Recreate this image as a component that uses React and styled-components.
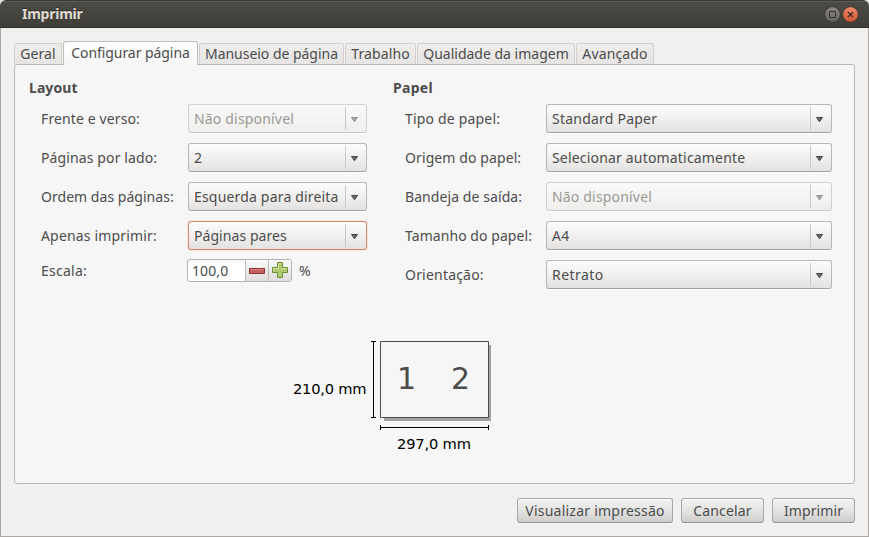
import React from "react";
import styled, { createGlobalStyle } from "styled-components";

const Global = createGlobalStyle`
  * { box-sizing: border-box; }
  html, body { margin: 0; padding: 0; background: #3c3b37; }
  body { width: 869px; height: 537px; overflow: hidden; }
`;

const Window = styled.div`
  width: 869px;
  height: 537px;
  display: flex;
  flex-direction: column;
  background: linear-gradient(135deg, #e6e6e6 4px, transparent 4px) 0 0 / 8px 8px no-repeat,
    linear-gradient(225deg, #e6e6e6 4px, transparent 4px) 100% 0 / 8px 8px no-repeat, #f1f0ee;
  font-family: "Noto Sans", "Open Sans", sans-serif;
  font-size: 14px;
  color: #4c4c4c;
  white-space: nowrap;
`;

const TitleBar = styled.header`
  height: 28px;
  flex: none;
  display: flex;
  align-items: center;
  gap: 2px;
  padding: 2px 10px 0 22px;
  border-radius: 6px 6px 0 0;
  border-bottom: 1px solid #302f2b;
  background: linear-gradient(#3c3b37 0 1px, #5d5b55 1px 2px, #4d4b46 2px, #3e3d38 100%);
  color: #dfdbd2;
  font-weight: 700;
  text-shadow: 0 -1px 0 #2b2a27;
`;

const Title = styled.h1`
  margin: 0 auto 2px 0;
  font-size: 14px;
  line-height: 20px;
  letter-spacing: -0.25px;
`;

const Body = styled.main`
  flex: 1;
  display: flex;
  flex-direction: column;
  padding: 13px 13px 13px;
  border: 1px solid #aaa7a4;
  border-top: 0;
`;

const Tabs = styled.nav`
  height: 24px;
  flex: none;
  display: flex;
  align-items: flex-end;
  gap: 1px;
  position: relative;
  z-index: 1;
`;

const Tab = styled.div`
  width: ${(p) => p.$w}px;
  height: ${(p) => (p.$active ? 24 : 21)}px;
  margin-bottom: ${(p) => (p.$active ? 0 : 1)}px;
  line-height: ${(p) => (p.$active ? 21 : 19)}px;
  text-align: center;
  border: 1px solid ${(p) => (p.$active ? "#c1bfbc" : "#d2d0cd")};
  border-bottom: 0;
  border-radius: 3px 3px 0 0;
  background: ${(p) => (p.$active ? "linear-gradient(#fff, #f6f6f6)" : "linear-gradient(#eeedec, #e6e5e3)")};
  letter-spacing: ${(p) => p.$ls || 0}px;
`;

const Panel = styled.section`
  height: 420px;
  margin-top: -1px;
  border: 1px solid #bab7b4;
  border-radius: 3px;
  background: #f6f6f6;
  padding: 13px 22px 0 14px;
`;

const Columns = styled.div`
  display: grid;
  grid-template-columns: 364px 439px;
  height: 240px;
`;

const Heading = styled.h2`
  margin: 0;
  height: 21px;
  font-size: 14px;
  line-height: 20px;
  font-weight: 700;
  letter-spacing: ${(p) => p.$ls || 0}px;
`;

const Row = styled.div`
  display: grid;
  grid-template-columns: ${(p) => p.$label}px auto;
  justify-content: start;
  align-items: center;
  height: 39px;
  padding-left: 12px;
`;

const Label = styled.span`
  line-height: 20px;
  letter-spacing: ${(p) => p.$ls || 0}px;
`;

const Combo = styled.div`
  width: ${(p) => p.$w}px;
  height: 29px;
  display: flex;
  align-items: center;
  padding-left: 5px;
  border: 1px solid ${(p) => (p.$focus ? "#d48b72" : p.$disabled ? "#d3d1cf" : "#b9b6b3")};
  border-bottom-color: ${(p) => (p.$focus ? "#d0846b" : p.$disabled ? "#cbc9c7" : "#a4a19e")};
  border-radius: 3px;
  color: ${(p) => (p.$disabled ? "#9b9893" : "#4c4c4c")};
  background: ${(p) => (p.$disabled ? "linear-gradient(#fafafa, #efeeed)" : "linear-gradient(#fcfcfc, #f1f0ef 50%, #e4e2e0)")};
  box-shadow: ${(p) => (p.$focus ? "0 0 0 1px #f6e6e0" : "0 1px 0 #fdfdfd")};
`;

const Value = styled.span`
  flex: 1;
  line-height: 20px;
  letter-spacing: ${(p) => p.$ls || 0}px;
`;

const ArrowCell = styled.span`
  width: 21px;
  height: 23px;
  display: flex;
  align-items: center;
  padding: 2px 0 0 4px;
  border-left: 1px solid #cbc9c7;
`;

const ScaleRow = styled.div`
  display: flex;
  align-items: center;
  height: 31px;
  padding-left: 12px;
`;

const ScaleLabel = styled(Label)`
  width: 146px;
`;

const Spin = styled.div`
  width: 105px;
  height: 23px;
  display: flex;
  margin-right: 7px;
  border: 1px solid #b6b3b0;
  border-radius: 3px;
  background: linear-gradient(#f3f3f3, #fff 4px);
  overflow: hidden;
`;

const SpinText = styled.span`
  width: 57px;
  padding-left: 4px;
  line-height: 22px;
  letter-spacing: 0.1px;
`;

const Step = styled.span`
  flex: 1;
  display: flex;
  align-items: center;
  justify-content: center;
  border-left: 1px solid #bebbb8;
  background: linear-gradient(#fafafa, #dfdddb);
`;

const Preview = styled.div`
  padding-left: 264px;
  margin-top: 17px;
  svg { display: block; }
`;

const Actions = styled.footer`
  display: flex;
  justify-content: flex-end;
  gap: 8px;
  margin-top: 14px;
`;

const Button = styled.button`
  width: ${(p) => p.$w}px;
  height: 25px;
  padding: 0;
  font: inherit;
  line-height: 22px;
  color: #4c4c4c;
  border: 1px solid #aaa7a4;
  border-bottom-color: #918e8b;
  border-radius: 3px;
  background: linear-gradient(#f3f3f3, #e3e3e2 50%, #cfcecd);
  box-shadow: inset 0 1px 0 #fff, 0 1px 0 #fafafa;
  letter-spacing: ${(p) => p.$ls || 0}px;
`;

const Arrow = ({ muted }) => (
  <svg width="9" height="6" viewBox="0 0 9 6">
    <path d="M1.500.5h6L4.500 4.800z" fill={muted ? "#a9a6a3" : "#6a6a6a"} stroke={muted ? "#97938f" : "#454545"} />
  </svg>
);

const Select = ({ value, w, disabled, focus, ls }) => (
  <Combo $w={w} $disabled={disabled} $focus={focus}>
    <Value $ls={ls}>{value}</Value>
    <ArrowCell><Arrow muted={disabled} /></ArrowCell>
  </Combo>
);

const tabs = [
  ["Geral", 48, 0.1],
  ["Configurar página", 135, -0.06, true],
  ["Manuseio de página", 145, -0.03],
  ["Trabalho", 71, 0.1],
  ["Qualidade da imagem", 158, 0],
  ["Avançado", 78, 0.15],
];

const layoutRows = [
  { label: "Frente e verso:", labelLs: 0.12, value: "Não disponível", ls: 0.18, disabled: true },
  { label: "Páginas por lado:", labelLs: 0.12, value: "2" },
  { label: "Ordem das páginas:", labelLs: 0.03, value: "Esquerda para direita", ls: 0.18 },
  { label: "Apenas imprimir:", labelLs: 0.17, value: "Páginas pares", ls: 0.06, focus: true },
];

const paperRows = [
  { label: "Tipo de papel:", labelLs: 0.18, value: "Standard Paper", ls: 0.22 },
  { label: "Origem do papel:", labelLs: 0.1, value: "Selecionar automaticamente", ls: 0.18 },
  { label: "Bandeja de saída:", labelLs: 0.08, value: "Não disponível", ls: 0.18, disabled: true },
  { label: "Tamanho do papel:", labelLs: 0.06, value: "A4", ls: 0.4 },
  { label: "Orientação:", labelLs: 0.2, value: "Retrato", ls: 0.45 },
];

const Fields = ({ rows, labelWidth, comboWidth }) => (
  <div>
    {rows.map((r) => (
      <Row key={r.label} $label={labelWidth}>
        <Label $ls={r.labelLs}>{r.label}</Label>
        <Select w={comboWidth} value={r.value} disabled={r.disabled} focus={r.focus} ls={r.ls} />
      </Row>
    ))}
  </div>
);

const WindowControls = () => (
  <svg width="35" height="18" viewBox="0 0 35 18">
    <defs>
      <linearGradient id="max" x2="0" y2="1"><stop stopColor="#8b8982" /><stop offset="1" stopColor="#63615b" /></linearGradient>
      <linearGradient id="close" x2="0" y2="1"><stop stopColor="#ee8e6f" /><stop offset="1" stopColor="#cc5330" /></linearGradient>
    </defs>
    <circle cx="8.5" cy="8.5" r="7.8" fill="url(#max)" stroke="#34332f" strokeWidth=".8" />
    <path d="M5.5 5.5h6v6h-6z" fill="none" stroke="#34332f" />
    <circle cx="26.5" cy="8.5" r="7.8" fill="url(#close)" stroke="#34332f" strokeWidth=".8" />
    <path d="M24 6l5 5m0-5l-5 5" stroke="#3c2b23" strokeWidth="1.3" />
  </svg>
);

const PagePreview = () => (
  <svg width="206" height="126" viewBox="0 0 206 126" fontFamily="DejaVu Sans, sans-serif" fontSize="14.67">
    <path d="M91 10h107v76H91z" fill="#a2a2a2" />
    <path d="M87.500 6.500h108v76h-108z" fill="#f6f6f6" stroke="#4c4c4c" />
    <path d="M80.500 6v77M78 6.500h5M78 82.500h5M87 92.500h109M87.500 90v5M195.500 90v5" fill="none" stroke="#000" />
    <g fill="#000">
      <text x="0" y="59" textLength="73.500">210,0 mm</text>
      <text x="104" y="114" textLength="74">297,0 mm</text>
    </g>
    <g fill="#4c4c4c" fontSize="30"><text x="104" y="54">1</text><text x="158" y="54">2</text></g>
  </svg>
);

export default function App() {
  return (
    <>
      <Global />
      <Window>
        <TitleBar>
          <Title>Imprimir</Title>
          <WindowControls />
        </TitleBar>
        <Body>
          <Tabs>
            {tabs.map(([name, w, ls, active]) => (
              <Tab key={name} $w={w} $ls={ls} $active={active}>{name}</Tab>
            ))}
          </Tabs>
          <Panel>
            <Columns>
              <div>
                <Heading $ls={0.08}>Layout</Heading>
                <Fields rows={layoutRows} labelWidth={147} comboWidth={179} />
                <ScaleRow>
                  <ScaleLabel $ls={0.25}>Escala:</ScaleLabel>
                  <Spin>
                    <SpinText>100,0</SpinText>
                    <Step>
                      <svg width="17" height="6"><path d="M.5.5h15v5H.5z" fill="#c4605c" stroke="#8e2f2f" /><path d="M2 1.500h12" stroke="#db8b88" /></svg>
                    </Step>
                    <Step>
                      <svg width="17" height="17"><path d="M5.500.5h5v5h5v5h-5v5h-5v-5h-5v-5h5z" fill="#b1ca6b" stroke="#6c8c33" /><path d="M6.500 6.500v-5h3M1.500 9.500v-3h5M10 6.500h4.500" fill="none" stroke="#d4e3a5" /></svg>
                    </Step>
                  </Spin>
                  <Label>%</Label>
                </ScaleRow>
              </div>
              <div>
                <Heading $ls={0.3}>Papel</Heading>
                <Fields rows={paperRows} labelWidth={141} comboWidth={286} />
              </div>
            </Columns>
            <Preview><PagePreview /></Preview>
          </Panel>
          <Actions>
            <Button $w={156} $ls={0.23}>Visualizar impressão</Button>
            <Button $w={83} $ls={0.15}>Cancelar</Button>
            <Button $w={83} $ls={0.1}>Imprimir</Button>
          </Actions>
        </Body>
      </Window>
    </>
  );
}
